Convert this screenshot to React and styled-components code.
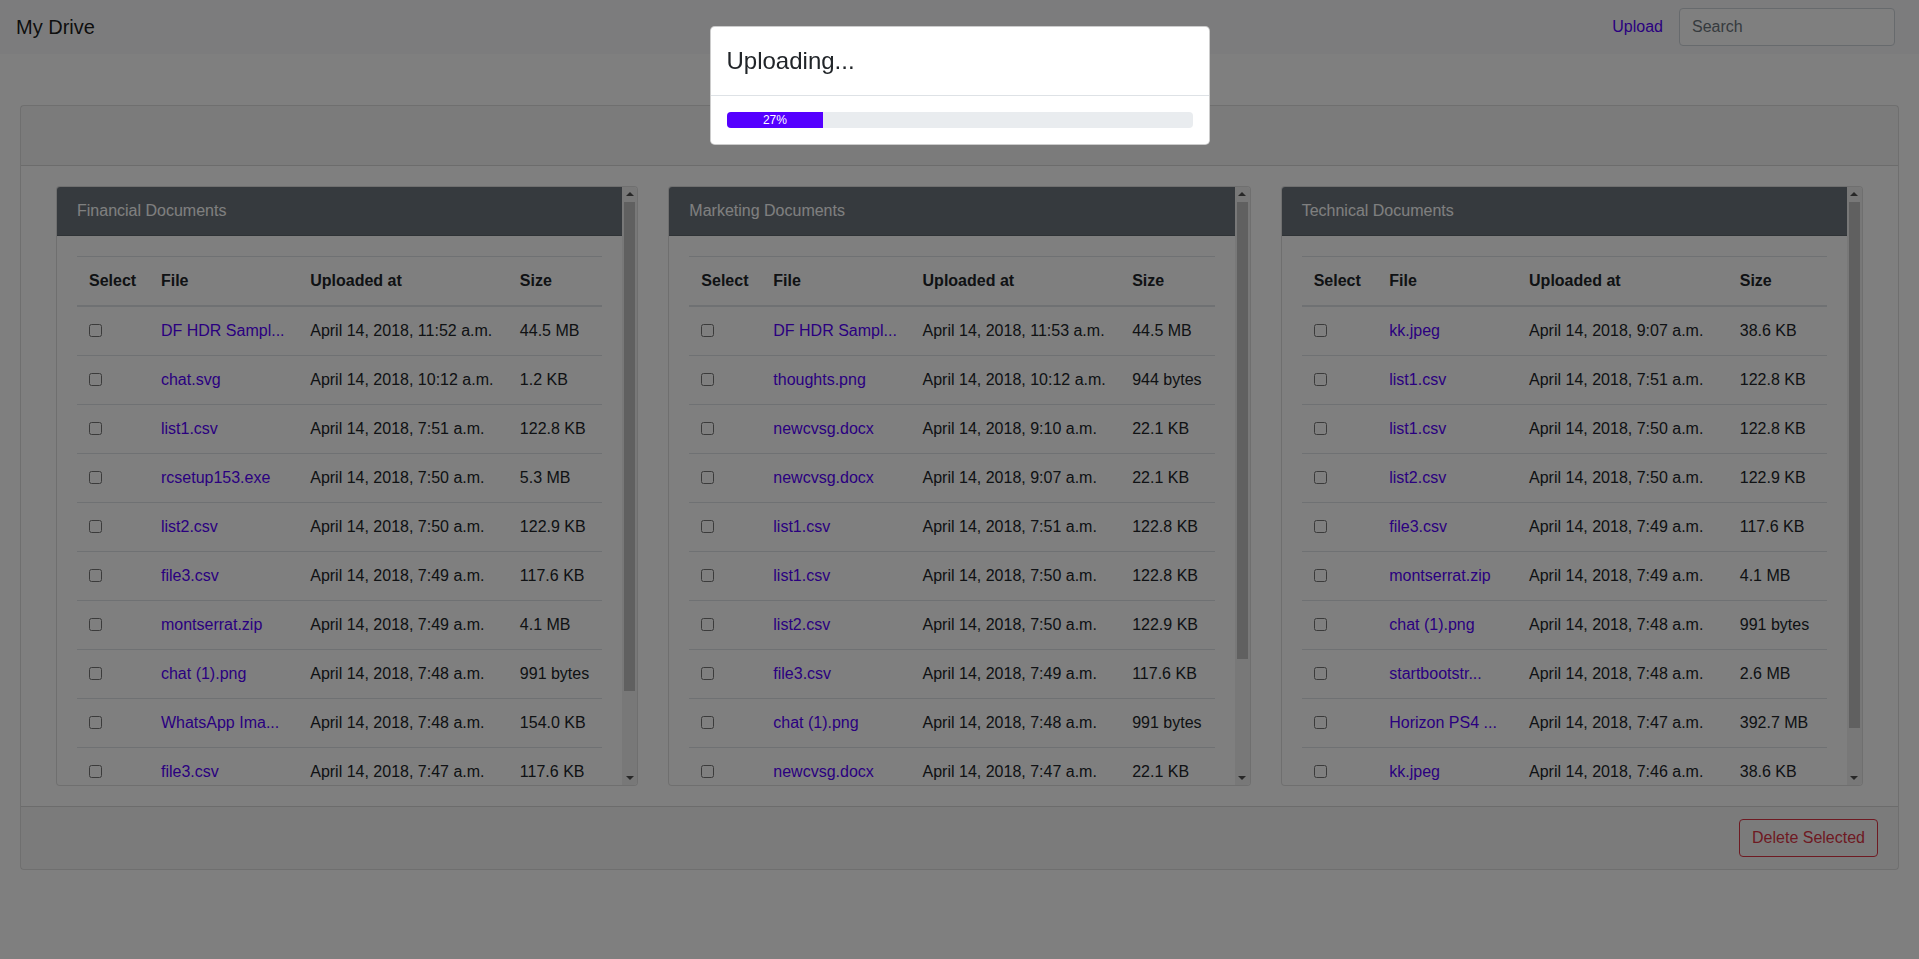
import React from "react";
import styled, { createGlobalStyle } from "styled-components";

const GlobalStyle = createGlobalStyle`
  *, *::before, *::after { box-sizing: border-box; }
  html, body { margin: 0; padding: 0; }
  body {
    font-family: "Liberation Sans", Arial, sans-serif;
    font-size: 16px;
    line-height: 1.5;
    color: #212529;
    background: #fff;
    overflow: hidden;
  }
`;

const Navbar = styled.nav`
  display: flex;
  align-items: center;
  justify-content: space-between;
  padding: 8px 16px;
  background: #f8f9fa;
  height: 54px;
`;

const Brand = styled.span`
  font-size: 20px;
  line-height: 30px;
  padding: 5px 0;
  color: rgba(0, 0, 0, 0.9);
`;

const NavRight = styled.div`
  display: flex;
  align-items: center;
`;

const NavLink = styled.a`
  color: #5500ff;
  text-decoration: none;
  padding: 8px;
  margin-right: 8px;
`;

const SearchInput = styled.input`
  width: 216px;
  height: 38px;
  padding: 6px 12px;
  font: inherit;
  font-size: 16px;
  color: #495057;
  border: 1px solid #ced4da;
  border-radius: 4px;
  margin-right: 8px;
  background: #fff;
  &::placeholder { color: #6c757d; }
`;

const MainCard = styled.section`
  margin: 51px 20px 0;
  border: 1px solid rgba(0, 0, 0, 0.125);
  border-radius: 4px;
  background: #fff;
`;

const MainHeader = styled.div`
  height: 60px;
  background: rgba(0, 0, 0, 0.03);
  border-bottom: 1px solid rgba(0, 0, 0, 0.125);
`;

const MainBody = styled.div`
  padding: 20px;
`;

const Columns = styled.div`
  display: grid;
  grid-template-columns: repeat(3, 1fr);
  gap: 30px;
  padding: 0 15px;
`;

const DocCard = styled.div`
  display: flex;
  height: 600px;
  overflow: hidden;
  border: 1px solid rgba(0, 0, 0, 0.125);
  border-radius: 4px;
  background: #fff;
`;

const DocContent = styled.div`
  flex: 1;
  min-width: 0;
  overflow: hidden;
`;

const ScrollBar = styled.div`
  width: 15px;
  flex: none;
  display: flex;
  flex-direction: column;
  background: #f1f1f1;
`;

const ArrowButton = styled.div`
  height: 15px;
  flex: none;
  display: flex;
  align-items: center;
  justify-content: center;
  &::before {
    content: "";
    width: 0;
    height: 0;
    border-left: 4px solid transparent;
    border-right: 4px solid transparent;
    ${(p) =>
      p.$down
        ? "border-top: 4px solid #505050; margin-top: 1px;"
        : "border-bottom: 4px solid #505050; margin-bottom: 1px;"}
  }
`;

const Track = styled.div`
  flex: 1;
  padding: 0 2px;
`;

const Thumb = styled.div`
  background: #c1c1c1;
`;

const DocHeader = styled.div`
  padding: 12px 20px;
  line-height: 24px;
  background: #6c757d;
  color: #fff;
  border-bottom: 1px solid rgba(0, 0, 0, 0.125);
`;

const DocBody = styled.div`
  padding: 20px;
`;

const Table = styled.table`
  width: 100%;
  border-collapse: collapse;
  margin-bottom: 16px;
  color: #212529;
`;

const Th = styled.th`
  text-align: left;
  font-weight: bold;
  padding: 12px;
  vertical-align: bottom;
  border-top: 1px solid #dee2e6;
  border-bottom: 2px solid #dee2e6;
  white-space: nowrap;
`;

const Td = styled.td`
  padding: 12px;
  vertical-align: top;
  border-top: 1px solid #dee2e6;
  white-space: nowrap;
`;

const Check = styled.input.attrs({ type: "checkbox" })`
  margin: 5px 0 0 0;
  width: 13px;
  height: 13px;
  display: block;
`;

const FileLink = styled.a`
  color: #5500ff;
  text-decoration: none;
`;

const MainFooter = styled.div`
  display: flex;
  justify-content: flex-end;
  padding: 12px 20px;
  background: rgba(0, 0, 0, 0.03);
  border-top: 1px solid rgba(0, 0, 0, 0.125);
`;

const DangerButton = styled.button`
  font: inherit;
  font-size: 16px;
  line-height: 24px;
  padding: 6px 12px;
  color: #dc3545;
  background: transparent;
  border: 1px solid #dc3545;
  border-radius: 4px;
`;

const Backdrop = styled.div`
  position: fixed;
  inset: 0;
  background: rgba(0, 0, 0, 0.5);
  z-index: 1040;
`;

const ModalLayer = styled.div`
  position: fixed;
  inset: 0;
  z-index: 1050;
`;

const ModalDialog = styled.div`
  width: 500px;
  margin: 26px auto 0;
  background: #fff;
  border: 1px solid rgba(0, 0, 0, 0.2);
  border-radius: 4.8px;
`;

const ModalHeader = styled.div`
  padding: 16px;
  border-bottom: 1px solid #dee2e6;
`;

const ModalTitle = styled.h4`
  margin: 0;
  font-size: 24px;
  font-weight: 500;
  line-height: 36px;
`;

const ModalBody = styled.div`
  padding: 16px;
`;

const Progress = styled.div`
  display: flex;
  height: 16px;
  overflow: hidden;
  font-size: 12px;
  background: #e9ecef;
  border-radius: 4px;
`;

const ProgressBar = styled.div`
  display: flex;
  justify-content: center;
  align-items: center;
  color: #fff;
  background: #5500ff;
  white-space: nowrap;
  line-height: 16px;
`;

const D = "April 14, 2018, ";

const groups = [
  {
    title: "Financial Documents",
    rows: [
      ["DF HDR Sampl...", "11:52 a.m.", "44.5 MB"],
      ["chat.svg", "10:12 a.m.", "1.2 KB"],
      ["list1.csv", "7:51 a.m.", "122.8 KB"],
      ["rcsetup153.exe", "7:50 a.m.", "5.3 MB"],
      ["list2.csv", "7:50 a.m.", "122.9 KB"],
      ["file3.csv", "7:49 a.m.", "117.6 KB"],
      ["montserrat.zip", "7:49 a.m.", "4.1 MB"],
      ["chat (1).png", "7:48 a.m.", "991 bytes"],
      ["WhatsApp Ima...", "7:48 a.m.", "154.0 KB"],
      ["file3.csv", "7:47 a.m.", "117.6 KB"],
      ["kk.jpeg", "7:46 a.m.", "38.6 KB"],
    ],
  },
  {
    title: "Marketing Documents",
    rows: [
      ["DF HDR Sampl...", "11:53 a.m.", "44.5 MB"],
      ["thoughts.png", "10:12 a.m.", "944 bytes"],
      ["newcvsg.docx", "9:10 a.m.", "22.1 KB"],
      ["newcvsg.docx", "9:07 a.m.", "22.1 KB"],
      ["list1.csv", "7:51 a.m.", "122.8 KB"],
      ["list1.csv", "7:50 a.m.", "122.8 KB"],
      ["list2.csv", "7:50 a.m.", "122.9 KB"],
      ["file3.csv", "7:49 a.m.", "117.6 KB"],
      ["chat (1).png", "7:48 a.m.", "991 bytes"],
      ["newcvsg.docx", "7:47 a.m.", "22.1 KB"],
      ["kk.jpeg", "7:46 a.m.", "38.6 KB"],
      ["chat.svg", "7:45 a.m.", "1.2 KB"],
    ],
  },
  {
    title: "Technical Documents",
    rows: [
      ["kk.jpeg", "9:07 a.m.", "38.6 KB"],
      ["list1.csv", "7:51 a.m.", "122.8 KB"],
      ["list1.csv", "7:50 a.m.", "122.8 KB"],
      ["list2.csv", "7:50 a.m.", "122.9 KB"],
      ["file3.csv", "7:49 a.m.", "117.6 KB"],
      ["montserrat.zip", "7:49 a.m.", "4.1 MB"],
      ["chat (1).png", "7:48 a.m.", "991 bytes"],
      ["startbootstr...", "7:48 a.m.", "2.6 MB"],
      ["Horizon PS4 ...", "7:47 a.m.", "392.7 MB"],
      ["kk.jpeg", "7:46 a.m.", "38.6 KB"],
    ],
  },
];

const VISIBLE = 598;

function DocumentTable({ title, rows }) {
  const contentHeight = 156 + 49 * rows.length;
  const thumbPct = Math.min(100, (VISIBLE / contentHeight) * 100);
  return (
    <DocCard>
      <DocContent>
        <DocHeader>{title}</DocHeader>
        <DocBody>
          <Table>
            <thead>
              <tr>
                <Th>Select</Th>
                <Th>File</Th>
                <Th>Uploaded at</Th>
                <Th>Size</Th>
              </tr>
            </thead>
            <tbody>
              {rows.map(([name, time, size], i) => (
                <tr key={i}>
                  <Td><Check /></Td>
                  <Td><FileLink href="#">{name}</FileLink></Td>
                  <Td>{D + time}</Td>
                  <Td>{size}</Td>
                </tr>
              ))}
            </tbody>
          </Table>
        </DocBody>
      </DocContent>
      <ScrollBar>
        <ArrowButton />
        <Track>
          <Thumb style={{ height: `${thumbPct}%` }} />
        </Track>
        <ArrowButton $down />
      </ScrollBar>
    </DocCard>
  );
}

export default function App() {
  const shown = 20.8;
  return (
    <>
      <GlobalStyle />
      <Navbar>
        <Brand>My Drive</Brand>
        <NavRight>
          <NavLink href="#">Upload</NavLink>
          <SearchInput placeholder="Search" />
        </NavRight>
      </Navbar>
      <MainCard>
        <MainHeader />
        <MainBody>
          <Columns>
            {groups.map((g) => (
              <DocumentTable key={g.title} title={g.title} rows={g.rows} />
            ))}
          </Columns>
        </MainBody>
        <MainFooter>
          <DangerButton>Delete Selected</DangerButton>
        </MainFooter>
      </MainCard>
      <Backdrop />
      <ModalLayer>
        <ModalDialog>
          <ModalHeader>
            <ModalTitle>Uploading...</ModalTitle>
          </ModalHeader>
          <ModalBody>
            <Progress>
              <ProgressBar style={{ width: `${shown}%` }}>27%</ProgressBar>
            </Progress>
          </ModalBody>
        </ModalDialog>
      </ModalLayer>
    </>
  );
}
